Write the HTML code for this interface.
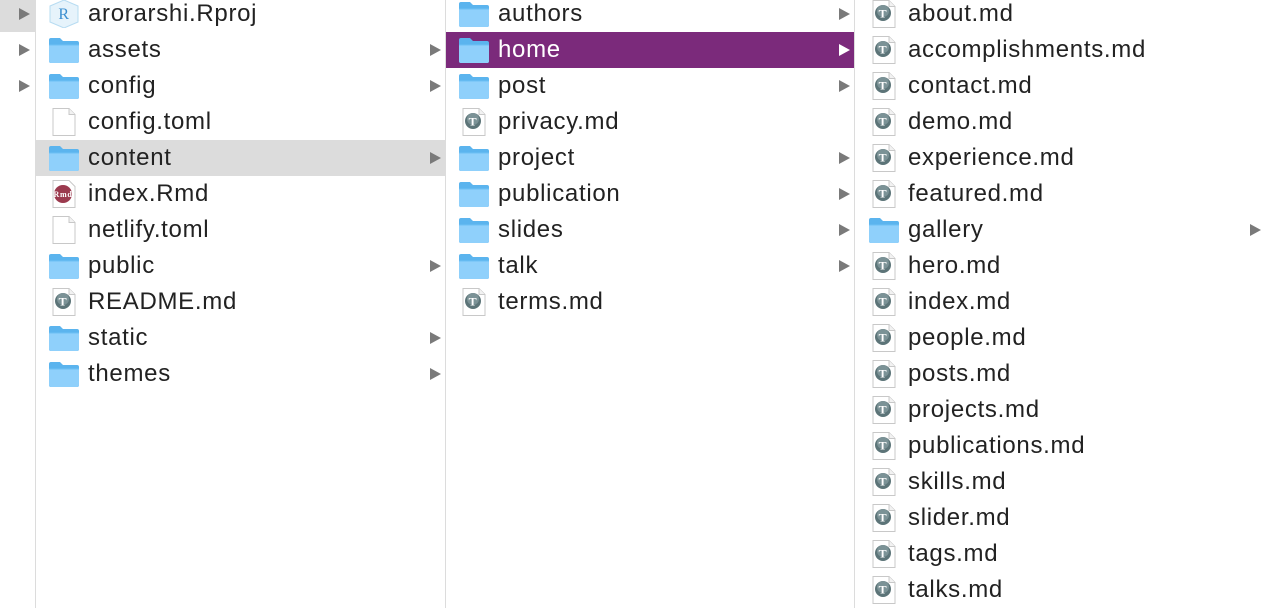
<!DOCTYPE html>
<html><head><meta charset="utf-8"><style>
body{margin:0;width:1265px;height:608px;overflow:hidden;background:#fff;font-family:"Liberation Sans",Arial,sans-serif;position:relative}
.col{position:absolute;top:0;height:608px;border-right:1px solid #dcdcdc}
.r{position:absolute;left:0;right:0;height:36px;font-size:24px;letter-spacing:0.7px;color:#222;line-height:36px}
.r svg.i{position:absolute;left:12px;top:4px}
.r span{position:absolute;left:52px;top:0}
.r .a{position:absolute;right:4px;top:12px;width:0;height:0;border-left:11px solid #7a7a7a;border-top:6.5px solid transparent;border-bottom:6.5px solid transparent}
.sel{background:#7b2a7b;color:#fff}
.sel .a{border-left-color:#fff}
.gr{background:#dcdcdc}
</style></head><body>
<svg width="0" height="0" style="position:absolute">
<defs>
<symbol id="f" viewBox="0 0 32 28"><path d="M1 4 q0-2 2-2 h9 l3 3 h14 q2 0 2 2 v18 q0 2-2 2 H3 q-2 0-2-2z" fill="#5bb4ee"/><path d="M1 9 h30 v16 q0 2-2 2 H3 q-2 0-2-2z" fill="#8fd0fb"/><path d="M1 9 h30" stroke="#6ec0f4" stroke-width="1"/></symbol>
<symbol id="d" viewBox="0 0 32 28"><path d="M5 0.5 h16 l6 6 v21 h-22z" fill="#fff" stroke="#c8c8c8"/><path d="M21 0.5 v6 h6" fill="#f2f2f2" stroke="#c8c8c8"/></symbol>
<symbol id="t" viewBox="0 0 32 28"><path d="M5 0.5 h16 l6 6 v21 h-22z" fill="#fff" stroke="#c8c8c8"/><path d="M21 0.5 v6 h6" fill="#f2f2f2" stroke="#c8c8c8"/><circle cx="15" cy="13" r="8" fill="#5c7478"/><circle cx="15" cy="11" r="6" fill="#8fa6aa" opacity=".6"/><text x="15" y="17.5" font-size="12" font-family="Liberation Serif" fill="#fff" text-anchor="middle" font-weight="bold">T</text></symbol>
<symbol id="rm" viewBox="0 0 32 28"><path d="M5 0.5 h16 l6 6 v21 h-22z" fill="#fff" stroke="#c8c8c8"/><circle cx="15" cy="14" r="9" fill="#9b3a4e"/><text x="15" y="17" font-size="8" font-family="Liberation Serif" fill="#fff" text-anchor="middle" font-weight="bold">Rmd</text></symbol>
<symbol id="rp" viewBox="0 0 32 28"><path d="M16 0 l14 6 v16 l-14 6 l-14-6 v-16z" fill="#e6f3fb" stroke="#b7dcf2"/><text x="16" y="19" font-size="16" font-family="Liberation Serif" fill="#3b8fd0" text-anchor="middle">R</text></symbol>
</defs></svg>

<div class="col" style="left:0;width:35px;background:#fff">
<div class="r gr" style="top:-4px"><div class="a" style="right:5px"></div></div>
<div class="r" style="top:32px"><div class="a" style="right:5px"></div></div>
<div class="r" style="top:68px"><div class="a" style="right:5px"></div></div>
</div>

<div class="col" style="left:36px;width:409px">
<div class="r" style="top:-4px"><svg class="i" width="32" height="28"><use href="#rp"/></svg><span>arorarshi.Rproj</span></div>
<div class="r" style="top:32px"><svg class="i" width="32" height="28"><use href="#f"/></svg><span>assets</span><div class="a"></div></div>
<div class="r" style="top:68px"><svg class="i" width="32" height="28"><use href="#f"/></svg><span>config</span><div class="a"></div></div>
<div class="r" style="top:104px"><svg class="i" width="32" height="28"><use href="#d"/></svg><span>config.toml</span></div>
<div class="r gr" style="top:140px"><svg class="i" width="32" height="28"><use href="#f"/></svg><span>content</span><div class="a"></div></div>
<div class="r" style="top:176px"><svg class="i" width="32" height="28"><use href="#rm"/></svg><span>index.Rmd</span></div>
<div class="r" style="top:212px"><svg class="i" width="32" height="28"><use href="#d"/></svg><span>netlify.toml</span></div>
<div class="r" style="top:248px"><svg class="i" width="32" height="28"><use href="#f"/></svg><span>public</span><div class="a"></div></div>
<div class="r" style="top:284px"><svg class="i" width="32" height="28"><use href="#t"/></svg><span>README.md</span></div>
<div class="r" style="top:320px"><svg class="i" width="32" height="28"><use href="#f"/></svg><span>static</span><div class="a"></div></div>
<div class="r" style="top:356px"><svg class="i" width="32" height="28"><use href="#f"/></svg><span>themes</span><div class="a"></div></div>
</div>

<div class="col" style="left:446px;width:408px">
<div class="r" style="top:-4px"><svg class="i" width="32" height="28"><use href="#f"/></svg><span>authors</span><div class="a"></div></div>
<div class="r sel" style="top:32px"><svg class="i" width="32" height="28"><use href="#f"/></svg><span>home</span><div class="a"></div></div>
<div class="r" style="top:68px"><svg class="i" width="32" height="28"><use href="#f"/></svg><span>post</span><div class="a"></div></div>
<div class="r" style="top:104px"><svg class="i" width="32" height="28"><use href="#t"/></svg><span>privacy.md</span></div>
<div class="r" style="top:140px"><svg class="i" width="32" height="28"><use href="#f"/></svg><span>project</span><div class="a"></div></div>
<div class="r" style="top:176px"><svg class="i" width="32" height="28"><use href="#f"/></svg><span>publication</span><div class="a"></div></div>
<div class="r" style="top:212px"><svg class="i" width="32" height="28"><use href="#f"/></svg><span>slides</span><div class="a"></div></div>
<div class="r" style="top:248px"><svg class="i" width="32" height="28"><use href="#f"/></svg><span>talk</span><div class="a"></div></div>
<div class="r" style="top:284px"><svg class="i" width="32" height="28"><use href="#t"/></svg><span>terms.md</span></div>
</div>

<div class="col" style="left:856px;width:409px;border-right:none">
<div class="r" style="top:-4px"><svg class="i" width="32" height="28"><use href="#t"/></svg><span>about.md</span></div>
<div class="r" style="top:32px"><svg class="i" width="32" height="28"><use href="#t"/></svg><span>accomplishments.md</span></div>
<div class="r" style="top:68px"><svg class="i" width="32" height="28"><use href="#t"/></svg><span>contact.md</span></div>
<div class="r" style="top:104px"><svg class="i" width="32" height="28"><use href="#t"/></svg><span>demo.md</span></div>
<div class="r" style="top:140px"><svg class="i" width="32" height="28"><use href="#t"/></svg><span>experience.md</span></div>
<div class="r" style="top:176px"><svg class="i" width="32" height="28"><use href="#t"/></svg><span>featured.md</span></div>
<div class="r" style="top:212px"><svg class="i" width="32" height="28"><use href="#f"/></svg><span>gallery</span><div class="a"></div></div>
<div class="r" style="top:248px"><svg class="i" width="32" height="28"><use href="#t"/></svg><span>hero.md</span></div>
<div class="r" style="top:284px"><svg class="i" width="32" height="28"><use href="#t"/></svg><span>index.md</span></div>
<div class="r" style="top:320px"><svg class="i" width="32" height="28"><use href="#t"/></svg><span>people.md</span></div>
<div class="r" style="top:356px"><svg class="i" width="32" height="28"><use href="#t"/></svg><span>posts.md</span></div>
<div class="r" style="top:392px"><svg class="i" width="32" height="28"><use href="#t"/></svg><span>projects.md</span></div>
<div class="r" style="top:428px"><svg class="i" width="32" height="28"><use href="#t"/></svg><span>publications.md</span></div>
<div class="r" style="top:464px"><svg class="i" width="32" height="28"><use href="#t"/></svg><span>skills.md</span></div>
<div class="r" style="top:500px"><svg class="i" width="32" height="28"><use href="#t"/></svg><span>slider.md</span></div>
<div class="r" style="top:536px"><svg class="i" width="32" height="28"><use href="#t"/></svg><span>tags.md</span></div>
<div class="r" style="top:572px"><svg class="i" width="32" height="28"><use href="#t"/></svg><span>talks.md</span></div>
</div>
</body></html>
